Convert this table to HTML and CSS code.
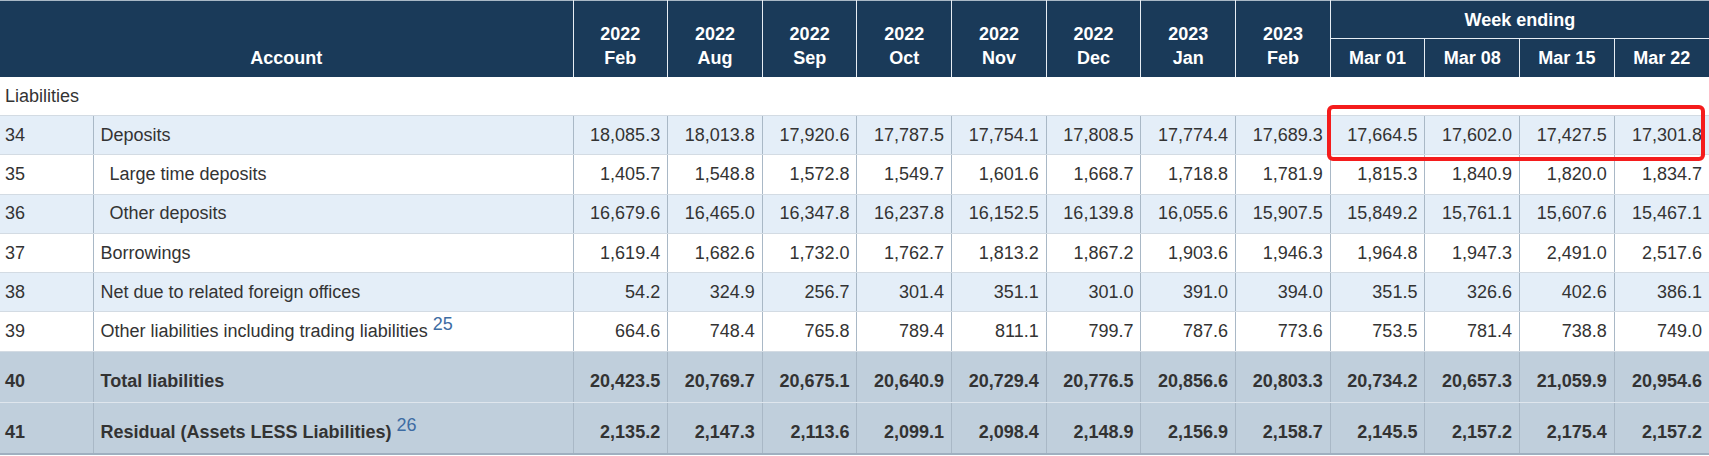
FILE: index.html
```html
<!DOCTYPE html>
<html lang="en">
<head>
<meta charset="utf-8">
<title>Liabilities</title>
<link rel="stylesheet" href="styles.css">
</head>
<body>
<div class="wrap">
<table class="data">
  <colgroup>
    <col class="c-num"><col class="c-acct">
    <col><col><col><col><col><col><col><col><col><col><col><col>
  </colgroup>
  <thead>
    <tr class="h1">
      <th colspan="2" rowspan="2" class="h-acct">Account</th>
      <th rowspan="2">2022<br>Feb</th>
      <th rowspan="2">2022<br>Aug</th>
      <th rowspan="2">2022<br>Sep</th>
      <th rowspan="2">2022<br>Oct</th>
      <th rowspan="2">2022<br>Nov</th>
      <th rowspan="2">2022<br>Dec</th>
      <th rowspan="2">2023<br>Jan</th>
      <th rowspan="2">2023<br>Feb</th>
      <th colspan="4" class="h-week">Week ending</th>
    </tr>
    <tr class="h2">
      <th>Mar 01</th>
      <th>Mar 08</th>
      <th>Mar 15</th>
      <th>Mar 22</th>
    </tr>
  </thead>
  <tbody>
    <tr class="section"><td colspan="14">Liabilities</td></tr>
    <tr class="row alt">
      <td class="num">34</td><td class="acct">Deposits</td>
      <td>18,085.3</td><td>18,013.8</td><td>17,920.6</td><td>17,787.5</td><td>17,754.1</td><td>17,808.5</td><td>17,774.4</td><td>17,689.3</td><td>17,664.5</td><td>17,602.0</td><td>17,427.5</td><td>17,301.8</td>
    </tr>
    <tr class="row">
      <td class="num">35</td><td class="acct sub">Large time deposits</td>
      <td>1,405.7</td><td>1,548.8</td><td>1,572.8</td><td>1,549.7</td><td>1,601.6</td><td>1,668.7</td><td>1,718.8</td><td>1,781.9</td><td>1,815.3</td><td>1,840.9</td><td>1,820.0</td><td>1,834.7</td>
    </tr>
    <tr class="row alt">
      <td class="num">36</td><td class="acct sub">Other deposits</td>
      <td>16,679.6</td><td>16,465.0</td><td>16,347.8</td><td>16,237.8</td><td>16,152.5</td><td>16,139.8</td><td>16,055.6</td><td>15,907.5</td><td>15,849.2</td><td>15,761.1</td><td>15,607.6</td><td>15,467.1</td>
    </tr>
    <tr class="row">
      <td class="num">37</td><td class="acct">Borrowings</td>
      <td>1,619.4</td><td>1,682.6</td><td>1,732.0</td><td>1,762.7</td><td>1,813.2</td><td>1,867.2</td><td>1,903.6</td><td>1,946.3</td><td>1,964.8</td><td>1,947.3</td><td>2,491.0</td><td>2,517.6</td>
    </tr>
    <tr class="row alt">
      <td class="num">38</td><td class="acct">Net due to related foreign offices</td>
      <td>54.2</td><td>324.9</td><td>256.7</td><td>301.4</td><td>351.1</td><td>301.0</td><td>391.0</td><td>394.0</td><td>351.5</td><td>326.6</td><td>402.6</td><td>386.1</td>
    </tr>
    <tr class="row">
      <td class="num">39</td><td class="acct">Other liabilities including trading liabilities <sup class="fn">25</sup></td>
      <td>664.6</td><td>748.4</td><td>765.8</td><td>789.4</td><td>811.1</td><td>799.7</td><td>787.6</td><td>773.6</td><td>753.5</td><td>781.4</td><td>738.8</td><td>749.0</td>
    </tr>
    <tr class="row total">
      <td class="num">40</td><td class="acct">Total liabilities</td>
      <td>20,423.5</td><td>20,769.7</td><td>20,675.1</td><td>20,640.9</td><td>20,729.4</td><td>20,776.5</td><td>20,856.6</td><td>20,803.3</td><td>20,734.2</td><td>20,657.3</td><td>21,059.9</td><td>20,954.6</td>
    </tr>
    <tr class="row total last">
      <td class="num">41</td><td class="acct">Residual (Assets LESS Liabilities) <sup class="fn">26</sup></td>
      <td>2,135.2</td><td>2,147.3</td><td>2,113.6</td><td>2,099.1</td><td>2,098.4</td><td>2,148.9</td><td>2,156.9</td><td>2,158.7</td><td>2,145.5</td><td>2,157.2</td><td>2,175.4</td><td>2,157.2</td>
    </tr>
  </tbody>
</table>
<div class="highlight"></div>
</div>
</body>
</html>
```

FILE: styles.css
```css
html, body {
  margin: 0;
  padding: 0;
  background: #ffffff;
}

body {
  font-family: "Liberation Sans", Arial, sans-serif;
  font-size: 18px;
  color: #333333;
}

.wrap {
  position: relative;
  width: 1709px;
}

.data {
  width: 1709px;
  border-collapse: collapse;
  table-layout: fixed;
  border-top: 1px solid #a9b8c6;
  border-bottom: 2px solid #9fb0c0;
}

.c-num { width: 93px; }
.c-acct { width: 480px; }

.data th {
  background: #1a3a59;
  color: #ffffff;
  font-weight: bold;
  line-height: 24px;
  padding: 0 4px;
  text-align: center;
  border-left: 1px solid #e6edf4;
  border-right: 1px solid #e6edf4;
}

.h1 th {
  vertical-align: bottom;
  padding-bottom: 7px;
}

.h1 th.h-acct {
  border-left: none;
}

.h1 th.h-week {
  height: 37px;
  padding: 0;
  vertical-align: middle;
  border-bottom: 1px solid #e6edf4;
}

.h2 th {
  height: 38px;
  padding: 0 4px;
  vertical-align: middle;
}

.data th:last-child {
  border-right: none;
}

.section td {
  height: 38px;
  padding: 0 5px;
  background: #ffffff;
  border-bottom: 1px solid #d3dbe3;
  vertical-align: middle;
}

.row td {
  height: 38.3px;
  padding: 0 7px 0 7px;
  text-align: right;
  vertical-align: middle;
  border-left: 1px solid #a9b8c6;
  border-bottom: 1px solid #d3dbe3;
  white-space: nowrap;
}

.row td.num {
  text-align: left;
  padding-left: 5px;
  border-left: none;
}

.row td.acct {
  text-align: left;
  padding-left: 7px;
}

.row td.acct.sub {
  padding-left: 16px;
}

.row.alt td {
  background: #e4eef8;
}

.row.total td {
  height: 40px;
  padding-top: 10px;
  background: #c0cfdc;
  font-weight: bold;
  border-bottom: 1px solid #dfe6ed;
}

.row.total.last td {
  height: 40px;
  border-bottom: none;
}

.fn {
  font-size: 18px;
  font-weight: normal;
  color: #3d6ca3;
  vertical-align: 7px;
  line-height: 0;
}

.highlight {
  position: absolute;
  left: 1327px;
  top: 105px;
  width: 370px;
  height: 48px;
  border: 4px solid #f41c1c;
  border-radius: 6px;
  pointer-events: none;
}
```
